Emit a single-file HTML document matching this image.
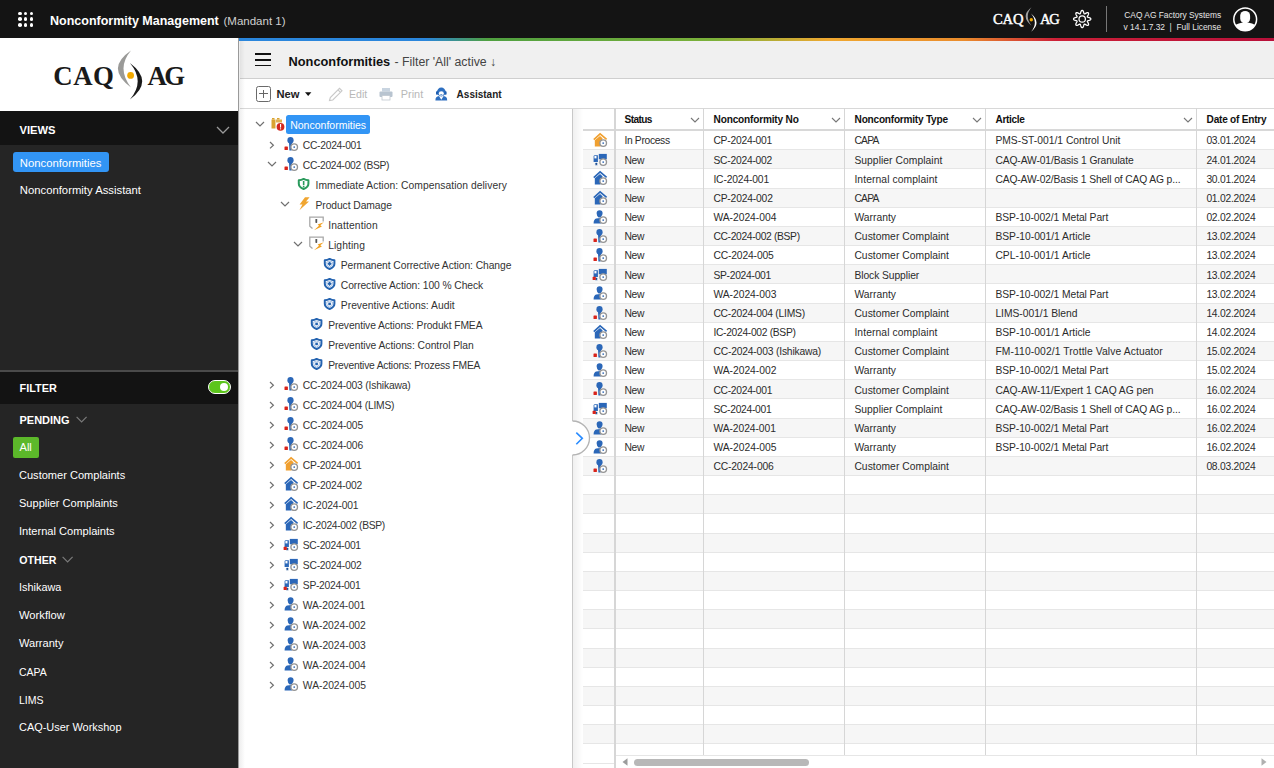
<!DOCTYPE html>
<html><head><meta charset="utf-8">
<style>
*{box-sizing:border-box;margin:0;padding:0}
html,body{width:1274px;height:768px;overflow:hidden;background:#fff;font-family:"Liberation Sans",sans-serif;}
.abs{position:absolute;display:block}
.t{position:absolute;white-space:nowrap;line-height:1}
svg{display:block}
</style></head><body>

<div class="abs" style="left:0;top:0;width:1274px;height:38px;background:#141414"></div>
<div class="abs" style="left:18.1px;top:11.7px;width:3.6px;height:3.6px;border-radius:50%;background:#fff"></div>
<div class="abs" style="left:18.1px;top:17.35px;width:3.6px;height:3.6px;border-radius:50%;background:#fff"></div>
<div class="abs" style="left:18.1px;top:23.0px;width:3.6px;height:3.6px;border-radius:50%;background:#fff"></div>
<div class="abs" style="left:23.900000000000002px;top:11.7px;width:3.6px;height:3.6px;border-radius:50%;background:#fff"></div>
<div class="abs" style="left:23.900000000000002px;top:17.35px;width:3.6px;height:3.6px;border-radius:50%;background:#fff"></div>
<div class="abs" style="left:23.900000000000002px;top:23.0px;width:3.6px;height:3.6px;border-radius:50%;background:#fff"></div>
<div class="abs" style="left:29.700000000000003px;top:11.7px;width:3.6px;height:3.6px;border-radius:50%;background:#fff"></div>
<div class="abs" style="left:29.700000000000003px;top:17.35px;width:3.6px;height:3.6px;border-radius:50%;background:#fff"></div>
<div class="abs" style="left:29.700000000000003px;top:23.0px;width:3.6px;height:3.6px;border-radius:50%;background:#fff"></div>
<div class="t" style="left:50.00px;top:14.98px;font-size:12.50px;font-weight:bold;color:#fff;">Nonconformity Management</div>
<div class="t" style="left:223.50px;top:15.83px;font-size:11.50px;color:#d0d0d0;">(Mandant 1)</div>
<div class="t" style="left:992.9px;top:12.47px;font-family:'Liberation Serif',serif;font-size:14.60px;font-weight:normal;color:#fff;-webkit-text-stroke:0.45px #fff;letter-spacing:-0.10px">CAQ</div><div class="t" style="left:1040.00px;top:12.47px;font-family:'Liberation Serif',serif;font-size:14.60px;font-weight:normal;color:#fff;-webkit-text-stroke:0.45px #fff;letter-spacing:-1.20px">AG</div><svg class="abs" style="left:1020.30px;top:5.20px" width="20.00" height="29.00" viewBox="0 0 40 58"><path d="M23 4.5 Q-0.40 22.2 23 41.5 Q8 22.2 23 4.5 Z" fill="#a0a0a0"/><path d="M21.9 17 Q44.25 35.4 21.9 53.6 Q37.5 35.4 21.9 17 Z" fill="#fff"/><circle cx="22.6" cy="29.4" r="3.4" fill="#f2a900"/></svg>
<svg class="abs" style="left:1072px;top:9px" width="20" height="20" viewBox="0 0 20 20"><path d="M10.20 1.35 L10.54 1.43 L10.86 1.64 L11.15 2.00 L11.39 2.46 L11.59 3.04 L11.73 3.62 L11.87 4.09 L12.00 4.47 L12.14 4.73 L12.32 4.87 L12.55 4.90 L12.84 4.82 L13.20 4.64 L13.63 4.41 L14.14 4.10 L14.69 3.82 L15.19 3.67 L15.64 3.63 L16.03 3.70 L16.32 3.88 L16.50 4.17 L16.57 4.56 L16.53 5.01 L16.38 5.51 L16.10 6.06 L15.79 6.57 L15.56 7.00 L15.38 7.36 L15.30 7.65 L15.33 7.88 L15.47 8.06 L15.73 8.20 L16.11 8.33 L16.58 8.47 L17.16 8.61 L17.74 8.81 L18.20 9.05 L18.56 9.34 L18.77 9.66 L18.85 10.00 L18.77 10.34 L18.56 10.66 L18.20 10.95 L17.74 11.19 L17.16 11.39 L16.58 11.53 L16.11 11.67 L15.73 11.80 L15.47 11.94 L15.33 12.12 L15.30 12.35 L15.38 12.64 L15.56 13.00 L15.79 13.43 L16.10 13.94 L16.38 14.49 L16.53 14.99 L16.57 15.44 L16.50 15.83 L16.32 16.12 L16.03 16.30 L15.64 16.37 L15.19 16.33 L14.69 16.18 L14.14 15.90 L13.63 15.59 L13.20 15.36 L12.84 15.18 L12.55 15.10 L12.32 15.13 L12.14 15.27 L12.00 15.53 L11.87 15.91 L11.73 16.38 L11.59 16.96 L11.39 17.54 L11.15 18.00 L10.86 18.36 L10.54 18.57 L10.20 18.65 L9.86 18.57 L9.54 18.36 L9.25 18.00 L9.01 17.54 L8.81 16.96 L8.67 16.38 L8.53 15.91 L8.40 15.53 L8.26 15.27 L8.08 15.13 L7.85 15.10 L7.56 15.18 L7.20 15.36 L6.77 15.59 L6.26 15.90 L5.71 16.18 L5.21 16.33 L4.76 16.37 L4.37 16.30 L4.08 16.12 L3.90 15.83 L3.83 15.44 L3.87 14.99 L4.02 14.49 L4.30 13.94 L4.61 13.43 L4.84 13.00 L5.02 12.64 L5.10 12.35 L5.07 12.12 L4.93 11.94 L4.67 11.80 L4.29 11.67 L3.82 11.53 L3.24 11.39 L2.66 11.19 L2.20 10.95 L1.84 10.66 L1.63 10.34 L1.55 10.00 L1.63 9.66 L1.84 9.34 L2.20 9.05 L2.66 8.81 L3.24 8.61 L3.82 8.47 L4.29 8.33 L4.67 8.20 L4.93 8.06 L5.07 7.88 L5.10 7.65 L5.02 7.36 L4.84 7.00 L4.61 6.57 L4.30 6.06 L4.02 5.51 L3.87 5.01 L3.83 4.56 L3.90 4.17 L4.08 3.88 L4.37 3.70 L4.76 3.63 L5.21 3.67 L5.71 3.82 L6.26 4.10 L6.77 4.41 L7.20 4.64 L7.56 4.82 L7.85 4.90 L8.08 4.87 L8.26 4.73 L8.40 4.47 L8.53 4.09 L8.67 3.62 L8.81 3.04 L9.01 2.46 L9.25 2.00 L9.54 1.64 L9.86 1.43 Z" fill="none" stroke="#fff" stroke-width="1.25" stroke-linejoin="round"/><circle cx="10.2" cy="10" r="3.2" fill="none" stroke="#fff" stroke-width="1.25"/></svg>
<div class="abs" style="left:1106px;top:6px;width:1px;height:26px;background:#777"></div>
<div class="t" style="left:1124.30px;top:10.56px;font-size:8.40px;color:#e6e6e6;">CAQ AG Factory Systems</div>
<div class="t" style="left:1123.50px;top:23.16px;font-size:8.40px;color:#e6e6e6;">v 14.1.7.32 &nbsp;|&nbsp; Full License</div>
<svg class="abs" style="left:1231px;top:5px" width="28" height="28" viewBox="0 0 28 28"><defs><clipPath id="av"><circle cx="14.2" cy="14.3" r="11.2"/></clipPath></defs><circle cx="14.2" cy="14.3" r="11.4" fill="none" stroke="#fff" stroke-width="1.5"/><g clip-path="url(#av)"><rect x="9.2" y="5.9" width="9.9" height="12.5" rx="4.9" fill="#fff"/><path d="M2 30 L2 22 Q6 17.5 14.2 17.5 Q22.4 17.5 26.4 22 L26.4 30 Z" fill="#fff"/></g></svg>
<div class="abs" style="left:0;top:38px;width:238px;height:730px;background:#252525"></div>
<div class="abs" style="left:0;top:38px;width:238px;height:73px;background:#fff"></div>
<div class="t" style="left:53.2px;top:62.86px;font-family:'Liberation Serif',serif;font-size:26.80px;font-weight:bold;color:#1a1a1a;-webkit-text-stroke:0px #1a1a1a;letter-spacing:0.60px">CAQ</div><div class="t" style="left:147.40px;top:62.86px;font-family:'Liberation Serif',serif;font-size:26.80px;font-weight:bold;color:#1a1a1a;-webkit-text-stroke:0px #1a1a1a;letter-spacing:-2.40px">AG</div><svg class="abs" style="left:108.00px;top:46.20px" width="40.00" height="58.00" viewBox="0 0 40 58"><path d="M23 4.5 Q-3.20 22.2 23 41.5 Q8 22.2 23 4.5 Z" fill="#9a9a98"/><path d="M21.9 17 Q46.50 35.4 21.9 53.6 Q37.5 35.4 21.9 17 Z" fill="#1a1a1a"/><circle cx="22.6" cy="29.4" r="3.4" fill="#f2a900"/></svg>
<div class="abs" style="left:0;top:111px;width:238px;height:34px;background:#131313"></div>
<div class="t" style="left:19.50px;top:125.18px;font-size:11.20px;font-weight:bold;color:#fff;">VIEWS</div>
<svg class="abs" style="left:216px;top:125.6px" width="14" height="9" viewBox="0 0 14 9"><path d="M1 1 L7 7 L13 1" fill="none" stroke="#9a9a9a" stroke-width="1.3"/></svg>
<div class="abs" style="left:13px;top:152px;width:96px;height:20.4px;background:#3295f5;border-radius:3px"></div>
<div class="t" style="left:19.80px;top:158.10px;font-size:11.30px;color:#fff;">Nonconformities</div>
<div class="t" style="left:19.80px;top:185.40px;font-size:11.30px;color:#fff;">Nonconformity Assistant</div>
<div class="abs" style="left:0;top:370px;width:238px;height:1.5px;background:#4a4a4a"></div>
<div class="abs" style="left:0;top:371.5px;width:238px;height:32px;background:#131313"></div>
<div class="t" style="left:19.50px;top:383.44px;font-size:10.90px;font-weight:bold;color:#fff;">FILTER</div>
<div class="abs" style="left:207.5px;top:380px;width:23.5px;height:14px;border-radius:7px;background:#5cc51c;border:1.3px solid #fff"></div>
<div class="abs" style="left:220px;top:383px;width:8px;height:8px;border-radius:50%;background:#fff"></div>
<div class="t" style="left:19.50px;top:414.65px;font-size:11.00px;font-weight:bold;color:#fff;">PENDING</div>
<svg class="abs" style="left:75.5px;top:415.6px" width="12" height="7" viewBox="0 0 12 7"><path d="M0.6 0.8 L5.6 5.8 L10.6 0.8" fill="none" stroke="#7a7a7a" stroke-width="1.2"/></svg>
<div class="abs" style="left:13px;top:437px;width:25.5px;height:20.5px;background:#5cb82a;border-radius:2px"></div>
<div class="t" style="left:19.50px;top:442.47px;font-size:11.10px;color:#fff;">All</div>
<div class="t" style="left:19.00px;top:470.20px;font-size:11.06px;color:#fff;">Customer Complaints</div>
<div class="t" style="left:19.00px;top:498.20px;font-size:11.06px;color:#fff;">Supplier Complaints</div>
<div class="t" style="left:19.00px;top:526.16px;font-size:11.10px;color:#fff;">Internal Complaints</div>
<div class="t" style="left:19.30px;top:554.99px;font-size:10.60px;font-weight:bold;color:#fff;">OTHER</div>
<svg class="abs" style="left:62px;top:556px" width="12" height="7" viewBox="0 0 12 7"><path d="M0.6 0.8 L5.6 5.8 L10.6 0.8" fill="none" stroke="#7a7a7a" stroke-width="1.2"/></svg>
<div class="t" style="left:19.00px;top:582.33px;font-size:10.90px;color:#fff;">Ishikawa</div>
<div class="t" style="left:19.00px;top:610.08px;font-size:11.20px;color:#fff;">Workflow</div>
<div class="t" style="left:19.00px;top:638.19px;font-size:11.07px;color:#fff;">Warranty</div>
<div class="t" style="left:19.00px;top:666.67px;font-size:10.50px;color:#fff;">CAPA</div>
<div class="t" style="left:19.00px;top:694.67px;font-size:10.50px;color:#fff;">LIMS</div>
<div class="t" style="left:19.00px;top:722.29px;font-size:10.95px;color:#fff;">CAQ-User Workshop</div>
<div class="abs" style="left:238px;top:38px;width:1px;height:730px;background:#9a9a9a"></div>
<div class="abs" style="left:239px;top:38px;width:1035px;height:2.5px;background:linear-gradient(90deg,#2a86dc 0%,#2a86dc 18%,#4fa040 24%,#7cb13a 46%,#f0a830 57%,#ea8c2c 70%,#cc2038 79%,#b8103a 100%)"></div>
<div class="abs" style="left:239.5px;top:40.5px;width:1035px;height:37.5px;background:#f0f0f0"></div>
<div class="abs" style="left:239.5px;top:77.5px;width:1035px;height:1.2px;background:#cfcfcf"></div>
<div class="abs" style="left:255px;top:53.3px;width:15.5px;height:1.6px;background:#111"></div>
<div class="abs" style="left:255px;top:59.05px;width:15.5px;height:1.6px;background:#111"></div>
<div class="abs" style="left:255px;top:64.8px;width:15.5px;height:1.6px;background:#111"></div>
<div class="t" style="left:288.50px;top:55.52px;font-size:12.80px;font-weight:bold;color:#111;">Nonconformities</div>
<div class="t" style="left:394.50px;top:55.94px;font-size:12.30px;color:#444;">- Filter 'All' active &#8595;</div>
<div class="abs" style="left:256px;top:86.1px;width:15.4px;height:15.6px;border:1.4px solid #6a6a6a;border-radius:2.5px"></div>
<div class="abs" style="left:259.3px;top:93.3px;width:8.8px;height:1.2px;background:#666"></div>
<div class="abs" style="left:263.1px;top:89.6px;width:1.2px;height:8.6px;background:#666"></div>
<div class="t" style="left:276.40px;top:88.88px;font-size:11.20px;font-weight:bold;color:#222;">New</div>
<svg class="abs" style="left:304.8px;top:92.2px" width="7" height="5" viewBox="0 0 7 5"><path d="M0 0.3 L6.4 0.3 L3.2 3.9 Z" fill="#111"/></svg>
<svg class="abs" style="left:328px;top:86.5px" width="16" height="15" viewBox="0 0 16 15"><path d="M1.5 13.5 L2.3 10.5 L11.5 1.3 L14 3.8 L4.8 13 Z M10 2.8 L12.5 5.3" fill="none" stroke="#c8c8c8" stroke-width="1.1"/></svg>
<div class="t" style="left:349.00px;top:89.39px;font-size:10.60px;color:#b8b8b8;">Edit</div>
<svg class="abs" style="left:378.5px;top:86.5px" width="14" height="14" viewBox="0 0 14 14"><rect x="3" y="1" width="8" height="3.5" fill="#c8d4e0"/><rect x="0.5" y="4.5" width="13" height="5.5" rx="1" fill="#b8c4d0"/><rect x="3" y="8.5" width="8" height="4.5" fill="#fff" stroke="#c0c8d0" stroke-width="0.8"/></svg>
<div class="t" style="left:400.80px;top:89.13px;font-size:10.90px;color:#b8b8b8;">Print</div>
<svg class="abs" style="left:434.8px;top:86.5px" width="13" height="14" viewBox="0 0 13 14"><circle cx="6.3" cy="5" r="4.4" fill="#2e6fc0"/><rect x="1" y="4.2" width="2" height="3.6" rx="0.8" fill="#1f5fb0"/><rect x="9.6" y="4.2" width="2" height="3.6" rx="0.8" fill="#1f5fb0"/><ellipse cx="6.3" cy="6.6" rx="2.5" ry="2.3" fill="#fff"/><rect x="5.3" y="7.3" width="2" height="1" fill="#2e6fc0"/><path d="M0.4 13.4 Q0.4 9.6 4 9.1 L6.3 12.8 L8.6 9.1 Q12.2 9.6 12.2 13.4 Z" fill="#2e6fc0"/></svg>
<div class="t" style="left:456.60px;top:89.90px;font-size:10.00px;font-weight:bold;color:#222;">Assistant</div>
<div class="abs" style="left:239.5px;top:107.8px;width:1035px;height:1.2px;background:#d8d8d8"></div>
<div class="abs" style="left:239px;top:40.5px;width:6px;height:728px;background:linear-gradient(90deg,rgba(0,0,0,0.07),rgba(0,0,0,0))"></div>
<svg class="abs" style="left:254.7px;top:121.2px" width="10" height="6" viewBox="0 0 10 6"><path d="M1 1 L5 5 L9 1" fill="none" stroke="#707070" stroke-width="1.2"/></svg>
<div class="abs" style="left:269.70px;top:116px;width:16px;height:16px"><svg width="16" height="16" viewBox="0 0 16 16"><rect x="1.5" y="3.5" width="4" height="9" fill="#d9a330"/><rect x="6" y="3.5" width="6" height="3" fill="#e0b050"/><rect x="2" y="2" width="2.5" height="1.5" fill="#d9a330"/><rect x="7" y="2" width="2.5" height="1.5" fill="#d9a330"/><circle cx="10.5" cy="10.8" r="3.9" fill="#d2281e"/><rect x="10" y="8" width="1.1" height="3.6" fill="#fff"/><rect x="10" y="12.3" width="1.1" height="1.1" fill="#fff"/></svg></div>
<div class="abs" style="left:285.8px;top:114.5px;width:84.2px;height:19px;background:#3295f5;border-radius:2.5px"></div>
<div class="t" style="left:290.20px;top:120.47px;font-size:10.50px;color:#fff;">Nonconformities</div>
<svg class="abs" style="left:268.5px;top:140.8px" width="6" height="10" viewBox="0 0 6 10"><path d="M1 1 L4.4 4.2 L1 7.4" fill="none" stroke="#707070" stroke-width="1.2"/></svg>
<div class="abs" style="left:282.70px;top:136px;width:16px;height:16px"><svg width="16" height="16" viewBox="0 0 16 16"><ellipse cx="7.5" cy="4.2" rx="3.1" ry="3.3" fill="#2b67b8"/><path d="M6 6.5 L9 6.5 L8.6 14.5 L6.4 14.5 Z" fill="#2b67b8"/><rect x="1.5" y="10.4" width="3.4" height="3.6" rx="0.6" fill="#d8231a"/><circle cx="11.2" cy="11.1" r="3.3" fill="#fff" stroke="#959595" stroke-width="1.35"/><circle cx="11.2" cy="11.1" r="0.9" fill="#3a6fb8"/></svg></div>
<div class="t" style="left:302.80px;top:140.65px;font-size:10.30px;color:#333;letter-spacing:-0.283px;">CC-2024-001</div>
<svg class="abs" style="left:267.37px;top:161.2px" width="10" height="6" viewBox="0 0 10 6"><path d="M1 1 L5 5 L9 1" fill="none" stroke="#707070" stroke-width="1.2"/></svg>
<div class="abs" style="left:282.70px;top:156px;width:16px;height:16px"><svg width="16" height="16" viewBox="0 0 16 16"><ellipse cx="7.5" cy="4.2" rx="3.1" ry="3.3" fill="#2b67b8"/><path d="M6 6.5 L9 6.5 L8.6 14.5 L6.4 14.5 Z" fill="#2b67b8"/><rect x="1.5" y="10.4" width="3.4" height="3.6" rx="0.6" fill="#d8231a"/><circle cx="11.2" cy="11.1" r="3.3" fill="#fff" stroke="#959595" stroke-width="1.35"/><circle cx="11.2" cy="11.1" r="0.9" fill="#3a6fb8"/></svg></div>
<div class="t" style="left:302.80px;top:160.65px;font-size:10.30px;color:#333;letter-spacing:-0.341px;">CC-2024-002 (BSP)</div>
<div class="abs" style="left:295.70px;top:176px;width:16px;height:16px"><svg width="16" height="16" viewBox="0 0 16 16"><path d="M7.6 2.9 Q9.9 4.2 12.4 4.3 L12.4 7.8 Q12.4 11.2 7.6 13 Q2.8 11.2 2.8 7.8 L2.8 4.3 Q5.3 4.2 7.6 2.9 Z" fill="#fff" stroke="#2a9a5c" stroke-width="2" stroke-linejoin="round"/><rect x="6.85" y="5" width="1.6" height="4.2" fill="#2a9a5c"/><rect x="6.85" y="9.9" width="1.6" height="1.5" fill="#2a9a5c"/></svg></div>
<div class="t" style="left:315.47px;top:180.65px;font-size:10.30px;color:#333;letter-spacing:0.050px;">Immediate Action: Compensation delivery</div>
<svg class="abs" style="left:280.03999999999996px;top:201.2px" width="10" height="6" viewBox="0 0 10 6"><path d="M1 1 L5 5 L9 1" fill="none" stroke="#707070" stroke-width="1.2"/></svg>
<div class="abs" style="left:295.70px;top:196px;width:16px;height:16px"><svg width="16" height="16" viewBox="0 0 16 16"><path d="M9 1.2 L13.6 1.2 L10 5.4 L13 5.4 L3.4 14.2 L6.4 8.4 L3.6 8.4 Z" fill="#f0a530"/></svg></div>
<div class="t" style="left:315.47px;top:200.65px;font-size:10.30px;color:#333;letter-spacing:-0.068px;">Product Damage</div>
<div class="abs" style="left:308.70px;top:216px;width:16px;height:16px"><svg width="16" height="16" viewBox="0 0 16 16"><path d="M14.2 5.5 L14.2 1.1 L0.8 1.1 L0.8 10.2 L3.5 12.6" fill="none" stroke="#a8a8a8" stroke-width="1.3"/><rect x="6.4" y="3" width="1.8" height="3.9" rx="0.6" fill="#555"/><path d="M14.9 6.3 L8.6 8.4 L10 9.7 L5 14.2 L12.9 10.6 L11.3 9.3 Z" fill="#f0a020"/></svg></div>
<div class="t" style="left:328.14px;top:220.65px;font-size:10.30px;color:#333;letter-spacing:0.150px;">Inattention</div>
<svg class="abs" style="left:292.71px;top:241.2px" width="10" height="6" viewBox="0 0 10 6"><path d="M1 1 L5 5 L9 1" fill="none" stroke="#707070" stroke-width="1.2"/></svg>
<div class="abs" style="left:308.70px;top:236px;width:16px;height:16px"><svg width="16" height="16" viewBox="0 0 16 16"><path d="M14.2 5.5 L14.2 1.1 L0.8 1.1 L0.8 10.2 L3.5 12.6" fill="none" stroke="#a8a8a8" stroke-width="1.3"/><rect x="6.4" y="3" width="1.8" height="3.9" rx="0.6" fill="#555"/><path d="M14.9 6.3 L8.6 8.4 L10 9.7 L5 14.2 L12.9 10.6 L11.3 9.3 Z" fill="#f0a020"/></svg></div>
<div class="t" style="left:328.14px;top:240.65px;font-size:10.30px;color:#333;letter-spacing:0.103px;">Lighting</div>
<div class="abs" style="left:321.70px;top:256px;width:16px;height:16px"><svg width="16" height="16" viewBox="0 0 16 16"><path d="M7.6 2.9 Q9.9 4.2 12.4 4.3 L12.4 7.8 Q12.4 11.2 7.6 13 Q2.8 11.2 2.8 7.8 L2.8 4.3 Q5.3 4.2 7.6 2.9 Z" fill="#fff" stroke="#2463b0" stroke-width="2" stroke-linejoin="round"/><path d="M7.6 5 Q8.9 5.8 10.4 5.9 L10.4 7.9 Q10.4 10 7.6 11.1 Q4.8 10 4.8 7.9 L4.8 5.9 Q6.3 5.8 7.6 5 Z" fill="none" stroke="#8fb0dc" stroke-width="0.8"/><path d="M7.6 5.6 L9.8 7.8 L7.6 10 L5.4 7.8 Z" fill="#2463b0"/></svg></div>
<div class="t" style="left:340.81px;top:260.65px;font-size:10.30px;color:#333;letter-spacing:-0.067px;">Permanent Corrective Action: Change</div>
<div class="abs" style="left:321.70px;top:276px;width:16px;height:16px"><svg width="16" height="16" viewBox="0 0 16 16"><path d="M7.6 2.9 Q9.9 4.2 12.4 4.3 L12.4 7.8 Q12.4 11.2 7.6 13 Q2.8 11.2 2.8 7.8 L2.8 4.3 Q5.3 4.2 7.6 2.9 Z" fill="#fff" stroke="#2463b0" stroke-width="2" stroke-linejoin="round"/><path d="M7.6 5 Q8.9 5.8 10.4 5.9 L10.4 7.9 Q10.4 10 7.6 11.1 Q4.8 10 4.8 7.9 L4.8 5.9 Q6.3 5.8 7.6 5 Z" fill="none" stroke="#8fb0dc" stroke-width="0.8"/><path d="M7.6 5.6 L9.8 7.8 L7.6 10 L5.4 7.8 Z" fill="#2463b0"/></svg></div>
<div class="t" style="left:340.81px;top:280.65px;font-size:10.30px;color:#333;letter-spacing:-0.084px;">Corrective Action: 100 % Check</div>
<div class="abs" style="left:321.70px;top:296px;width:16px;height:16px"><svg width="16" height="16" viewBox="0 0 16 16"><path d="M7.6 2.9 Q9.9 4.2 12.4 4.3 L12.4 7.8 Q12.4 11.2 7.6 13 Q2.8 11.2 2.8 7.8 L2.8 4.3 Q5.3 4.2 7.6 2.9 Z" fill="#fff" stroke="#2463b0" stroke-width="2" stroke-linejoin="round"/><path d="M7.6 5 Q8.9 5.8 10.4 5.9 L10.4 7.9 Q10.4 10 7.6 11.1 Q4.8 10 4.8 7.9 L4.8 5.9 Q6.3 5.8 7.6 5 Z" fill="none" stroke="#8fb0dc" stroke-width="0.8"/><rect x="6.3" y="6.6" width="2.6" height="2.6" fill="#2463b0"/></svg></div>
<div class="t" style="left:340.81px;top:300.65px;font-size:10.30px;color:#333;letter-spacing:0.018px;">Preventive Actions: Audit</div>
<div class="abs" style="left:308.70px;top:316px;width:16px;height:16px"><svg width="16" height="16" viewBox="0 0 16 16"><path d="M7.6 2.9 Q9.9 4.2 12.4 4.3 L12.4 7.8 Q12.4 11.2 7.6 13 Q2.8 11.2 2.8 7.8 L2.8 4.3 Q5.3 4.2 7.6 2.9 Z" fill="#fff" stroke="#2463b0" stroke-width="2" stroke-linejoin="round"/><path d="M7.6 5 Q8.9 5.8 10.4 5.9 L10.4 7.9 Q10.4 10 7.6 11.1 Q4.8 10 4.8 7.9 L4.8 5.9 Q6.3 5.8 7.6 5 Z" fill="none" stroke="#8fb0dc" stroke-width="0.8"/><rect x="6.3" y="6.6" width="2.6" height="2.6" fill="#2463b0"/></svg></div>
<div class="t" style="left:328.14px;top:320.65px;font-size:10.30px;color:#333;letter-spacing:-0.097px;">Preventive Actions: Produkt FMEA</div>
<div class="abs" style="left:308.70px;top:336px;width:16px;height:16px"><svg width="16" height="16" viewBox="0 0 16 16"><path d="M7.6 2.9 Q9.9 4.2 12.4 4.3 L12.4 7.8 Q12.4 11.2 7.6 13 Q2.8 11.2 2.8 7.8 L2.8 4.3 Q5.3 4.2 7.6 2.9 Z" fill="#fff" stroke="#2463b0" stroke-width="2" stroke-linejoin="round"/><path d="M7.6 5 Q8.9 5.8 10.4 5.9 L10.4 7.9 Q10.4 10 7.6 11.1 Q4.8 10 4.8 7.9 L4.8 5.9 Q6.3 5.8 7.6 5 Z" fill="none" stroke="#8fb0dc" stroke-width="0.8"/><rect x="6.3" y="6.6" width="2.6" height="2.6" fill="#2463b0"/></svg></div>
<div class="t" style="left:328.14px;top:340.65px;font-size:10.30px;color:#333;letter-spacing:-0.049px;">Preventive Actions: Control Plan</div>
<div class="abs" style="left:308.70px;top:356px;width:16px;height:16px"><svg width="16" height="16" viewBox="0 0 16 16"><path d="M7.6 2.9 Q9.9 4.2 12.4 4.3 L12.4 7.8 Q12.4 11.2 7.6 13 Q2.8 11.2 2.8 7.8 L2.8 4.3 Q5.3 4.2 7.6 2.9 Z" fill="#fff" stroke="#2463b0" stroke-width="2" stroke-linejoin="round"/><path d="M7.6 5 Q8.9 5.8 10.4 5.9 L10.4 7.9 Q10.4 10 7.6 11.1 Q4.8 10 4.8 7.9 L4.8 5.9 Q6.3 5.8 7.6 5 Z" fill="none" stroke="#8fb0dc" stroke-width="0.8"/><rect x="6.3" y="6.6" width="2.6" height="2.6" fill="#2463b0"/></svg></div>
<div class="t" style="left:328.14px;top:360.65px;font-size:10.30px;color:#333;letter-spacing:-0.220px;">Preventive Actions: Prozess FMEA</div>
<svg class="abs" style="left:268.5px;top:380.8px" width="6" height="10" viewBox="0 0 6 10"><path d="M1 1 L4.4 4.2 L1 7.4" fill="none" stroke="#707070" stroke-width="1.2"/></svg>
<div class="abs" style="left:282.70px;top:376px;width:16px;height:16px"><svg width="16" height="16" viewBox="0 0 16 16"><ellipse cx="7.5" cy="4.2" rx="3.1" ry="3.3" fill="#2b67b8"/><path d="M6 6.5 L9 6.5 L8.6 14.5 L6.4 14.5 Z" fill="#2b67b8"/><rect x="1.5" y="10.4" width="3.4" height="3.6" rx="0.6" fill="#d8231a"/><circle cx="11.2" cy="11.1" r="3.3" fill="#fff" stroke="#959595" stroke-width="1.35"/><circle cx="11.2" cy="11.1" r="0.9" fill="#3a6fb8"/></svg></div>
<div class="t" style="left:302.80px;top:380.65px;font-size:10.30px;color:#333;letter-spacing:-0.177px;">CC-2024-003 (Ishikawa)</div>
<svg class="abs" style="left:268.5px;top:400.8px" width="6" height="10" viewBox="0 0 6 10"><path d="M1 1 L4.4 4.2 L1 7.4" fill="none" stroke="#707070" stroke-width="1.2"/></svg>
<div class="abs" style="left:282.70px;top:396px;width:16px;height:16px"><svg width="16" height="16" viewBox="0 0 16 16"><ellipse cx="7.5" cy="4.2" rx="3.1" ry="3.3" fill="#2b67b8"/><path d="M6 6.5 L9 6.5 L8.6 14.5 L6.4 14.5 Z" fill="#2b67b8"/><rect x="1.5" y="10.4" width="3.4" height="3.6" rx="0.6" fill="#d8231a"/><circle cx="11.2" cy="11.1" r="3.3" fill="#fff" stroke="#959595" stroke-width="1.35"/><circle cx="11.2" cy="11.1" r="0.9" fill="#3a6fb8"/></svg></div>
<div class="t" style="left:302.80px;top:400.65px;font-size:10.30px;color:#333;letter-spacing:-0.229px;">CC-2024-004 (LIMS)</div>
<svg class="abs" style="left:268.5px;top:420.8px" width="6" height="10" viewBox="0 0 6 10"><path d="M1 1 L4.4 4.2 L1 7.4" fill="none" stroke="#707070" stroke-width="1.2"/></svg>
<div class="abs" style="left:282.70px;top:416px;width:16px;height:16px"><svg width="16" height="16" viewBox="0 0 16 16"><ellipse cx="7.5" cy="4.2" rx="3.1" ry="3.3" fill="#2b67b8"/><path d="M6 6.5 L9 6.5 L8.6 14.5 L6.4 14.5 Z" fill="#2b67b8"/><rect x="1.5" y="10.4" width="3.4" height="3.6" rx="0.6" fill="#d8231a"/><circle cx="11.2" cy="11.1" r="3.3" fill="#fff" stroke="#959595" stroke-width="1.35"/><circle cx="11.2" cy="11.1" r="0.9" fill="#3a6fb8"/></svg></div>
<div class="t" style="left:302.80px;top:420.65px;font-size:10.30px;color:#333;letter-spacing:-0.143px;">CC-2024-005</div>
<svg class="abs" style="left:268.5px;top:440.8px" width="6" height="10" viewBox="0 0 6 10"><path d="M1 1 L4.4 4.2 L1 7.4" fill="none" stroke="#707070" stroke-width="1.2"/></svg>
<div class="abs" style="left:282.70px;top:436px;width:16px;height:16px"><svg width="16" height="16" viewBox="0 0 16 16"><ellipse cx="7.5" cy="4.2" rx="3.1" ry="3.3" fill="#2b67b8"/><path d="M6 6.5 L9 6.5 L8.6 14.5 L6.4 14.5 Z" fill="#2b67b8"/><rect x="1.5" y="10.4" width="3.4" height="3.6" rx="0.6" fill="#d8231a"/><circle cx="11.2" cy="11.1" r="3.3" fill="#fff" stroke="#959595" stroke-width="1.35"/><circle cx="11.2" cy="11.1" r="0.9" fill="#3a6fb8"/></svg></div>
<div class="t" style="left:302.80px;top:440.65px;font-size:10.30px;color:#333;letter-spacing:-0.143px;">CC-2024-006</div>
<svg class="abs" style="left:268.5px;top:460.8px" width="6" height="10" viewBox="0 0 6 10"><path d="M1 1 L4.4 4.2 L1 7.4" fill="none" stroke="#707070" stroke-width="1.2"/></svg>
<div class="abs" style="left:282.70px;top:456px;width:16px;height:16px"><svg width="16" height="16" viewBox="0 0 16 16"><path d="M1.8 7.6 L8.1 1.9 L14.6 7.4" fill="none" stroke="#f0a030" stroke-width="1.7"/><path d="M2.8 8.2 L8 3.9 L10.6 6.2 L8.5 14.5 L2.8 14.5 Z" fill="#f0a030"/><circle cx="11.2" cy="11.1" r="3.3" fill="#fff" stroke="#959595" stroke-width="1.35"/><circle cx="11.2" cy="11.1" r="0.9" fill="#3a6fb8"/></svg></div>
<div class="t" style="left:302.80px;top:460.65px;font-size:10.30px;color:#333;letter-spacing:-0.236px;">CP-2024-001</div>
<svg class="abs" style="left:268.5px;top:480.8px" width="6" height="10" viewBox="0 0 6 10"><path d="M1 1 L4.4 4.2 L1 7.4" fill="none" stroke="#707070" stroke-width="1.2"/></svg>
<div class="abs" style="left:282.70px;top:476px;width:16px;height:16px"><svg width="16" height="16" viewBox="0 0 16 16"><path d="M1.8 7.6 L8.1 1.9 L14.6 7.4" fill="none" stroke="#2b67b8" stroke-width="1.7"/><path d="M2.8 8.2 L8 3.9 L10.6 6.2 L8.5 14.5 L2.8 14.5 Z" fill="#2b67b8"/><circle cx="11.2" cy="11.1" r="3.3" fill="#fff" stroke="#959595" stroke-width="1.35"/><circle cx="11.2" cy="11.1" r="0.9" fill="#3a6fb8"/></svg></div>
<div class="t" style="left:302.80px;top:480.65px;font-size:10.30px;color:#333;letter-spacing:-0.176px;">CP-2024-002</div>
<svg class="abs" style="left:268.5px;top:500.8px" width="6" height="10" viewBox="0 0 6 10"><path d="M1 1 L4.4 4.2 L1 7.4" fill="none" stroke="#707070" stroke-width="1.2"/></svg>
<div class="abs" style="left:282.70px;top:496px;width:16px;height:16px"><svg width="16" height="16" viewBox="0 0 16 16"><path d="M1.8 7.6 L8.1 1.9 L14.6 7.4" fill="none" stroke="#2b67b8" stroke-width="1.7"/><path d="M2.8 8.2 L8 3.9 L10.6 6.2 L8.5 14.5 L2.8 14.5 Z" fill="#2b67b8"/><circle cx="11.2" cy="11.1" r="3.3" fill="#fff" stroke="#959595" stroke-width="1.35"/><circle cx="11.2" cy="11.1" r="0.9" fill="#3a6fb8"/></svg></div>
<div class="t" style="left:302.80px;top:500.65px;font-size:10.30px;color:#333;letter-spacing:-0.145px;">IC-2024-001</div>
<svg class="abs" style="left:268.5px;top:520.8px" width="6" height="10" viewBox="0 0 6 10"><path d="M1 1 L4.4 4.2 L1 7.4" fill="none" stroke="#707070" stroke-width="1.2"/></svg>
<div class="abs" style="left:282.70px;top:516px;width:16px;height:16px"><svg width="16" height="16" viewBox="0 0 16 16"><path d="M1.8 7.6 L8.1 1.9 L14.6 7.4" fill="none" stroke="#2b67b8" stroke-width="1.7"/><path d="M2.8 8.2 L8 3.9 L10.6 6.2 L8.5 14.5 L2.8 14.5 Z" fill="#2b67b8"/><circle cx="11.2" cy="11.1" r="3.3" fill="#fff" stroke="#959595" stroke-width="1.35"/><circle cx="11.2" cy="11.1" r="0.9" fill="#3a6fb8"/></svg></div>
<div class="t" style="left:302.80px;top:520.64px;font-size:10.30px;color:#333;letter-spacing:-0.318px;">IC-2024-002 (BSP)</div>
<svg class="abs" style="left:268.5px;top:540.8px" width="6" height="10" viewBox="0 0 6 10"><path d="M1 1 L4.4 4.2 L1 7.4" fill="none" stroke="#707070" stroke-width="1.2"/></svg>
<div class="abs" style="left:282.70px;top:536px;width:16px;height:16px"><svg width="16" height="16" viewBox="0 0 16 16"><rect x="6.8" y="2.9" width="8" height="5.4" fill="#2b67b8"/><path d="M1.6 5.6 Q1.6 4.2 3 4.2 L5.9 4.2 L5.9 11 L1.6 11 Z" fill="#2b67b8"/><rect x="2.4" y="5" width="2.1" height="2.4" fill="#fff"/><circle cx="4.3" cy="12.9" r="1.5" fill="#1d4f94" stroke="#fff" stroke-width="0.6"/><rect x="0.6" y="10.8" width="3.2" height="3.3" rx="0.6" fill="#d8231a"/><circle cx="11.2" cy="11.1" r="3.3" fill="#fff" stroke="#959595" stroke-width="1.35"/><circle cx="11.2" cy="11.1" r="0.9" fill="#3a6fb8"/></svg></div>
<div class="t" style="left:302.80px;top:540.64px;font-size:10.30px;color:#333;letter-spacing:-0.296px;">SC-2024-001</div>
<svg class="abs" style="left:268.5px;top:560.8px" width="6" height="10" viewBox="0 0 6 10"><path d="M1 1 L4.4 4.2 L1 7.4" fill="none" stroke="#707070" stroke-width="1.2"/></svg>
<div class="abs" style="left:282.70px;top:556px;width:16px;height:16px"><svg width="16" height="16" viewBox="0 0 16 16"><rect x="6.8" y="2.9" width="8" height="5.4" fill="#2b67b8"/><path d="M1.6 5.6 Q1.6 4.2 3 4.2 L5.9 4.2 L5.9 11 L1.6 11 Z" fill="#2b67b8"/><rect x="2.4" y="5" width="2.1" height="2.4" fill="#fff"/><circle cx="4.3" cy="12.9" r="1.5" fill="#1d4f94" stroke="#fff" stroke-width="0.6"/><circle cx="11.2" cy="11.1" r="3.3" fill="#fff" stroke="#959595" stroke-width="1.35"/><circle cx="11.2" cy="11.1" r="0.9" fill="#3a6fb8"/></svg></div>
<div class="t" style="left:302.80px;top:560.64px;font-size:10.30px;color:#333;letter-spacing:-0.236px;">SC-2024-002</div>
<svg class="abs" style="left:268.5px;top:580.8px" width="6" height="10" viewBox="0 0 6 10"><path d="M1 1 L4.4 4.2 L1 7.4" fill="none" stroke="#707070" stroke-width="1.2"/></svg>
<div class="abs" style="left:282.70px;top:576px;width:16px;height:16px"><svg width="16" height="16" viewBox="0 0 16 16"><rect x="6.8" y="2.9" width="8" height="5.4" fill="#2b67b8"/><path d="M1.6 5.6 Q1.6 4.2 3 4.2 L5.9 4.2 L5.9 11 L1.6 11 Z" fill="#2b67b8"/><rect x="2.4" y="5" width="2.1" height="2.4" fill="#fff"/><circle cx="4.3" cy="12.9" r="1.5" fill="#1d4f94" stroke="#fff" stroke-width="0.6"/><rect x="0.6" y="10.8" width="3.2" height="3.3" rx="0.6" fill="#d8231a"/><circle cx="11.2" cy="11.1" r="3.3" fill="#fff" stroke="#959595" stroke-width="1.35"/><circle cx="11.2" cy="11.1" r="0.9" fill="#3a6fb8"/></svg></div>
<div class="t" style="left:302.80px;top:580.64px;font-size:10.30px;color:#333;letter-spacing:-0.279px;">SP-2024-001</div>
<svg class="abs" style="left:268.5px;top:600.8px" width="6" height="10" viewBox="0 0 6 10"><path d="M1 1 L4.4 4.2 L1 7.4" fill="none" stroke="#707070" stroke-width="1.2"/></svg>
<div class="abs" style="left:282.70px;top:596px;width:16px;height:16px"><svg width="16" height="16" viewBox="0 0 16 16"><path d="M4.6 4.3 Q4.6 1.2 7.6 1.2 Q10.6 1.2 10.6 4.3 Q10.6 6.8 8.8 8 L8.2 8.6 L6.6 8.6 Q4.6 6.8 4.6 4.3 Z" fill="#2b67b8"/><path d="M1.6 14.6 Q1.6 10.4 4.2 9.6 Q6 9 8.6 9 L9 14.6 Z" fill="#2b67b8"/><circle cx="11.2" cy="11.1" r="3.3" fill="#fff" stroke="#959595" stroke-width="1.35"/><circle cx="11.2" cy="11.1" r="0.9" fill="#3a6fb8"/></svg></div>
<div class="t" style="left:302.80px;top:600.64px;font-size:10.30px;color:#333;letter-spacing:-0.066px;">WA-2024-001</div>
<svg class="abs" style="left:268.5px;top:620.8px" width="6" height="10" viewBox="0 0 6 10"><path d="M1 1 L4.4 4.2 L1 7.4" fill="none" stroke="#707070" stroke-width="1.2"/></svg>
<div class="abs" style="left:282.70px;top:616px;width:16px;height:16px"><svg width="16" height="16" viewBox="0 0 16 16"><path d="M4.6 4.3 Q4.6 1.2 7.6 1.2 Q10.6 1.2 10.6 4.3 Q10.6 6.8 8.8 8 L8.2 8.6 L6.6 8.6 Q4.6 6.8 4.6 4.3 Z" fill="#2b67b8"/><path d="M1.6 14.6 Q1.6 10.4 4.2 9.6 Q6 9 8.6 9 L9 14.6 Z" fill="#2b67b8"/><circle cx="11.2" cy="11.1" r="3.3" fill="#fff" stroke="#959595" stroke-width="1.35"/><circle cx="11.2" cy="11.1" r="0.9" fill="#3a6fb8"/></svg></div>
<div class="t" style="left:302.80px;top:620.64px;font-size:10.30px;color:#333;letter-spacing:-0.016px;">WA-2024-002</div>
<svg class="abs" style="left:268.5px;top:640.8px" width="6" height="10" viewBox="0 0 6 10"><path d="M1 1 L4.4 4.2 L1 7.4" fill="none" stroke="#707070" stroke-width="1.2"/></svg>
<div class="abs" style="left:282.70px;top:636px;width:16px;height:16px"><svg width="16" height="16" viewBox="0 0 16 16"><path d="M4.6 4.3 Q4.6 1.2 7.6 1.2 Q10.6 1.2 10.6 4.3 Q10.6 6.8 8.8 8 L8.2 8.6 L6.6 8.6 Q4.6 6.8 4.6 4.3 Z" fill="#2b67b8"/><path d="M1.6 14.6 Q1.6 10.4 4.2 9.6 Q6 9 8.6 9 L9 14.6 Z" fill="#2b67b8"/><circle cx="11.2" cy="11.1" r="3.3" fill="#fff" stroke="#959595" stroke-width="1.35"/><circle cx="11.2" cy="11.1" r="0.9" fill="#3a6fb8"/></svg></div>
<div class="t" style="left:302.80px;top:640.64px;font-size:10.30px;color:#333;letter-spacing:-0.016px;">WA-2024-003</div>
<svg class="abs" style="left:268.5px;top:660.8px" width="6" height="10" viewBox="0 0 6 10"><path d="M1 1 L4.4 4.2 L1 7.4" fill="none" stroke="#707070" stroke-width="1.2"/></svg>
<div class="abs" style="left:282.70px;top:656px;width:16px;height:16px"><svg width="16" height="16" viewBox="0 0 16 16"><path d="M4.6 4.3 Q4.6 1.2 7.6 1.2 Q10.6 1.2 10.6 4.3 Q10.6 6.8 8.8 8 L8.2 8.6 L6.6 8.6 Q4.6 6.8 4.6 4.3 Z" fill="#2b67b8"/><path d="M1.6 14.6 Q1.6 10.4 4.2 9.6 Q6 9 8.6 9 L9 14.6 Z" fill="#2b67b8"/><circle cx="11.2" cy="11.1" r="3.3" fill="#fff" stroke="#959595" stroke-width="1.35"/><circle cx="11.2" cy="11.1" r="0.9" fill="#3a6fb8"/></svg></div>
<div class="t" style="left:302.80px;top:660.64px;font-size:10.30px;color:#333;letter-spacing:-0.016px;">WA-2024-004</div>
<svg class="abs" style="left:268.5px;top:680.8px" width="6" height="10" viewBox="0 0 6 10"><path d="M1 1 L4.4 4.2 L1 7.4" fill="none" stroke="#707070" stroke-width="1.2"/></svg>
<div class="abs" style="left:282.70px;top:676px;width:16px;height:16px"><svg width="16" height="16" viewBox="0 0 16 16"><path d="M4.6 4.3 Q4.6 1.2 7.6 1.2 Q10.6 1.2 10.6 4.3 Q10.6 6.8 8.8 8 L8.2 8.6 L6.6 8.6 Q4.6 6.8 4.6 4.3 Z" fill="#2b67b8"/><path d="M1.6 14.6 Q1.6 10.4 4.2 9.6 Q6 9 8.6 9 L9 14.6 Z" fill="#2b67b8"/><circle cx="11.2" cy="11.1" r="3.3" fill="#fff" stroke="#959595" stroke-width="1.35"/><circle cx="11.2" cy="11.1" r="0.9" fill="#3a6fb8"/></svg></div>
<div class="t" style="left:302.80px;top:680.64px;font-size:10.30px;color:#333;letter-spacing:-0.006px;">WA-2024-005</div>
<div class="abs" style="left:572px;top:109px;width:1px;height:659px;background:#c8c8c8"></div>
<div class="abs" style="left:573px;top:109px;width:10px;height:659px;background:linear-gradient(90deg,#f0f0f0,#fff)"></div>
<div class="abs" style="left:582.5px;top:130.50px;width:691.5px;height:19.17px;background:#fff"></div>
<div class="abs" style="left:582.5px;top:149.67px;width:691.5px;height:19.17px;background:#f6f6f6"></div>
<div class="abs" style="left:582.5px;top:168.84px;width:691.5px;height:19.17px;background:#fff"></div>
<div class="abs" style="left:582.5px;top:188.01px;width:691.5px;height:19.17px;background:#f6f6f6"></div>
<div class="abs" style="left:582.5px;top:207.18px;width:691.5px;height:19.17px;background:#fff"></div>
<div class="abs" style="left:582.5px;top:226.35px;width:691.5px;height:19.17px;background:#f6f6f6"></div>
<div class="abs" style="left:582.5px;top:245.52px;width:691.5px;height:19.17px;background:#fff"></div>
<div class="abs" style="left:582.5px;top:264.69px;width:691.5px;height:19.17px;background:#f6f6f6"></div>
<div class="abs" style="left:582.5px;top:283.86px;width:691.5px;height:19.17px;background:#fff"></div>
<div class="abs" style="left:582.5px;top:303.03px;width:691.5px;height:19.17px;background:#f6f6f6"></div>
<div class="abs" style="left:582.5px;top:322.20px;width:691.5px;height:19.17px;background:#fff"></div>
<div class="abs" style="left:582.5px;top:341.37px;width:691.5px;height:19.17px;background:#f6f6f6"></div>
<div class="abs" style="left:582.5px;top:360.54px;width:691.5px;height:19.17px;background:#fff"></div>
<div class="abs" style="left:582.5px;top:379.71px;width:691.5px;height:19.17px;background:#f6f6f6"></div>
<div class="abs" style="left:582.5px;top:398.88px;width:691.5px;height:19.17px;background:#fff"></div>
<div class="abs" style="left:582.5px;top:418.05px;width:691.5px;height:19.17px;background:#f6f6f6"></div>
<div class="abs" style="left:582.5px;top:437.22px;width:691.5px;height:19.17px;background:#fff"></div>
<div class="abs" style="left:582.5px;top:456.39px;width:691.5px;height:19.17px;background:#f6f6f6"></div>
<div class="abs" style="left:582.5px;top:475.56px;width:691.5px;height:19.17px;background:#fff"></div>
<div class="abs" style="left:582.5px;top:494.73px;width:691.5px;height:19.17px;background:#f6f6f6"></div>
<div class="abs" style="left:582.5px;top:513.90px;width:691.5px;height:19.17px;background:#fff"></div>
<div class="abs" style="left:582.5px;top:533.07px;width:691.5px;height:19.17px;background:#f6f6f6"></div>
<div class="abs" style="left:582.5px;top:552.24px;width:691.5px;height:19.17px;background:#fff"></div>
<div class="abs" style="left:582.5px;top:571.41px;width:691.5px;height:19.17px;background:#f6f6f6"></div>
<div class="abs" style="left:582.5px;top:590.58px;width:691.5px;height:19.17px;background:#fff"></div>
<div class="abs" style="left:582.5px;top:609.75px;width:691.5px;height:19.17px;background:#f6f6f6"></div>
<div class="abs" style="left:582.5px;top:628.92px;width:691.5px;height:19.17px;background:#fff"></div>
<div class="abs" style="left:582.5px;top:648.09px;width:691.5px;height:19.17px;background:#f6f6f6"></div>
<div class="abs" style="left:582.5px;top:667.26px;width:691.5px;height:19.17px;background:#fff"></div>
<div class="abs" style="left:582.5px;top:686.43px;width:691.5px;height:19.17px;background:#f6f6f6"></div>
<div class="abs" style="left:582.5px;top:705.60px;width:691.5px;height:19.17px;background:#fff"></div>
<div class="abs" style="left:582.5px;top:724.77px;width:691.5px;height:19.17px;background:#f6f6f6"></div>
<div class="abs" style="left:582.5px;top:743.94px;width:691.5px;height:19.17px;background:#fff"></div>
<div class="abs" style="left:582.5px;top:149.17px;width:691.5px;height:1px;background:#e6e6e6"></div>
<div class="abs" style="left:582.5px;top:168.34px;width:691.5px;height:1px;background:#e6e6e6"></div>
<div class="abs" style="left:582.5px;top:187.51px;width:691.5px;height:1px;background:#e6e6e6"></div>
<div class="abs" style="left:582.5px;top:206.68px;width:691.5px;height:1px;background:#e6e6e6"></div>
<div class="abs" style="left:582.5px;top:225.85px;width:691.5px;height:1px;background:#e6e6e6"></div>
<div class="abs" style="left:582.5px;top:245.02px;width:691.5px;height:1px;background:#e6e6e6"></div>
<div class="abs" style="left:582.5px;top:264.19px;width:691.5px;height:1px;background:#e6e6e6"></div>
<div class="abs" style="left:582.5px;top:283.36px;width:691.5px;height:1px;background:#e6e6e6"></div>
<div class="abs" style="left:582.5px;top:302.53px;width:691.5px;height:1px;background:#e6e6e6"></div>
<div class="abs" style="left:582.5px;top:321.70px;width:691.5px;height:1px;background:#e6e6e6"></div>
<div class="abs" style="left:582.5px;top:340.87px;width:691.5px;height:1px;background:#e6e6e6"></div>
<div class="abs" style="left:582.5px;top:360.04px;width:691.5px;height:1px;background:#e6e6e6"></div>
<div class="abs" style="left:582.5px;top:379.21px;width:691.5px;height:1px;background:#e6e6e6"></div>
<div class="abs" style="left:582.5px;top:398.38px;width:691.5px;height:1px;background:#e6e6e6"></div>
<div class="abs" style="left:582.5px;top:417.55px;width:691.5px;height:1px;background:#e6e6e6"></div>
<div class="abs" style="left:582.5px;top:436.72px;width:691.5px;height:1px;background:#e6e6e6"></div>
<div class="abs" style="left:582.5px;top:455.89px;width:691.5px;height:1px;background:#e6e6e6"></div>
<div class="abs" style="left:582.5px;top:475.06px;width:691.5px;height:1px;background:#e6e6e6"></div>
<div class="abs" style="left:582.5px;top:494.23px;width:691.5px;height:1px;background:#e6e6e6"></div>
<div class="abs" style="left:582.5px;top:513.40px;width:691.5px;height:1px;background:#e6e6e6"></div>
<div class="abs" style="left:582.5px;top:532.57px;width:691.5px;height:1px;background:#e6e6e6"></div>
<div class="abs" style="left:582.5px;top:551.74px;width:691.5px;height:1px;background:#e6e6e6"></div>
<div class="abs" style="left:582.5px;top:570.91px;width:691.5px;height:1px;background:#e6e6e6"></div>
<div class="abs" style="left:582.5px;top:590.08px;width:691.5px;height:1px;background:#e6e6e6"></div>
<div class="abs" style="left:582.5px;top:609.25px;width:691.5px;height:1px;background:#e6e6e6"></div>
<div class="abs" style="left:582.5px;top:628.42px;width:691.5px;height:1px;background:#e6e6e6"></div>
<div class="abs" style="left:582.5px;top:647.59px;width:691.5px;height:1px;background:#e6e6e6"></div>
<div class="abs" style="left:582.5px;top:666.76px;width:691.5px;height:1px;background:#e6e6e6"></div>
<div class="abs" style="left:582.5px;top:685.93px;width:691.5px;height:1px;background:#e6e6e6"></div>
<div class="abs" style="left:582.5px;top:705.10px;width:691.5px;height:1px;background:#e6e6e6"></div>
<div class="abs" style="left:582.5px;top:724.27px;width:691.5px;height:1px;background:#e6e6e6"></div>
<div class="abs" style="left:582.5px;top:743.44px;width:691.5px;height:1px;background:#e6e6e6"></div>
<div class="abs" style="left:582.5px;top:762.61px;width:691.5px;height:1px;background:#e6e6e6"></div>
<div class="abs" style="left:582.5px;top:128.9px;width:691.5px;height:2px;background:#d8d8d8"></div>
<div class="abs" style="left:614.2px;top:108.2px;width:1.6px;height:647.0999999999999px;background:#d6d6d6"></div>
<div class="abs" style="left:702.6px;top:108.2px;width:1.6px;height:647.0999999999999px;background:#d6d6d6"></div>
<div class="abs" style="left:843.5px;top:108.2px;width:1.6px;height:647.0999999999999px;background:#d6d6d6"></div>
<div class="abs" style="left:984.5px;top:108.2px;width:1.6px;height:647.0999999999999px;background:#d6d6d6"></div>
<div class="abs" style="left:1195.5px;top:108.2px;width:1.6px;height:647.0999999999999px;background:#d6d6d6"></div>
<div class="t" style="left:624.60px;top:114.81px;font-size:10.10px;font-weight:bold;color:#111;letter-spacing:-0.633px;">Status</div>
<svg class="abs" style="left:690px;top:116.5px" width="10" height="6" viewBox="0 0 10 6"><path d="M1 1 L5 5 L9 1" fill="none" stroke="#777" stroke-width="1.1"/></svg>
<div class="t" style="left:713.60px;top:114.81px;font-size:10.10px;font-weight:bold;color:#111;letter-spacing:-0.186px;">Nonconformity No</div>
<svg class="abs" style="left:831px;top:116.5px" width="10" height="6" viewBox="0 0 10 6"><path d="M1 1 L5 5 L9 1" fill="none" stroke="#777" stroke-width="1.1"/></svg>
<div class="t" style="left:854.60px;top:114.81px;font-size:10.10px;font-weight:bold;color:#111;letter-spacing:-0.232px;">Nonconformity Type</div>
<svg class="abs" style="left:972px;top:116.5px" width="10" height="6" viewBox="0 0 10 6"><path d="M1 1 L5 5 L9 1" fill="none" stroke="#777" stroke-width="1.1"/></svg>
<div class="t" style="left:995.60px;top:114.81px;font-size:10.10px;font-weight:bold;color:#111;letter-spacing:-0.356px;">Article</div>
<svg class="abs" style="left:1183px;top:116.5px" width="10" height="6" viewBox="0 0 10 6"><path d="M1 1 L5 5 L9 1" fill="none" stroke="#777" stroke-width="1.1"/></svg>
<div class="t" style="left:1206.60px;top:114.81px;font-size:10.10px;font-weight:bold;color:#111;letter-spacing:-0.238px;">Date of Entry</div>
<div class="abs" style="left:592px;top:132.09px;width:16px;height:16px"><svg width="16" height="16" viewBox="0 0 16 16"><path d="M1.8 7.6 L8.1 1.9 L14.6 7.4" fill="none" stroke="#f0a030" stroke-width="1.7"/><path d="M2.8 8.2 L8 3.9 L10.6 6.2 L8.5 14.5 L2.8 14.5 Z" fill="#f0a030"/><circle cx="11.2" cy="11.1" r="3.3" fill="#fff" stroke="#959595" stroke-width="1.35"/><circle cx="11.2" cy="11.1" r="0.9" fill="#3a6fb8"/></svg></div>
<div class="t" style="left:624.40px;top:136.45px;font-size:10.30px;color:#2b2b2b;letter-spacing:-0.328px;">In Process</div>
<div class="t" style="left:713.40px;top:136.45px;font-size:10.30px;color:#2b2b2b;letter-spacing:-0.236px;">CP-2024-001</div>
<div class="t" style="left:854.40px;top:136.45px;font-size:10.30px;color:#2b2b2b;letter-spacing:-0.762px;">CAPA</div>
<div class="t" style="left:995.40px;top:136.45px;font-size:10.30px;color:#2b2b2b;letter-spacing:0.009px;">PMS-ST-001/1 Control Unit</div>
<div class="t" style="left:1206.40px;top:136.45px;font-size:10.30px;color:#2b2b2b;letter-spacing:-0.249px;">03.01.2024</div>
<div class="abs" style="left:592px;top:151.26px;width:16px;height:16px"><svg width="16" height="16" viewBox="0 0 16 16"><rect x="6.8" y="2.9" width="8" height="5.4" fill="#2b67b8"/><path d="M1.6 5.6 Q1.6 4.2 3 4.2 L5.9 4.2 L5.9 11 L1.6 11 Z" fill="#2b67b8"/><rect x="2.4" y="5" width="2.1" height="2.4" fill="#fff"/><circle cx="4.3" cy="12.9" r="1.5" fill="#1d4f94" stroke="#fff" stroke-width="0.6"/><circle cx="11.2" cy="11.1" r="3.3" fill="#fff" stroke="#959595" stroke-width="1.35"/><circle cx="11.2" cy="11.1" r="0.9" fill="#3a6fb8"/></svg></div>
<div class="t" style="left:624.40px;top:155.62px;font-size:10.30px;color:#2b2b2b;letter-spacing:-0.302px;">New</div>
<div class="t" style="left:713.40px;top:155.62px;font-size:10.30px;color:#2b2b2b;letter-spacing:-0.236px;">SC-2024-002</div>
<div class="t" style="left:854.40px;top:155.62px;font-size:10.30px;color:#2b2b2b;letter-spacing:0.052px;">Supplier Complaint</div>
<div class="t" style="left:995.40px;top:155.62px;font-size:10.30px;color:#2b2b2b;letter-spacing:-0.119px;">CAQ-AW-01/Basis 1 Granulate</div>
<div class="t" style="left:1206.40px;top:155.62px;font-size:10.30px;color:#2b2b2b;letter-spacing:-0.249px;">24.01.2024</div>
<div class="abs" style="left:592px;top:170.43px;width:16px;height:16px"><svg width="16" height="16" viewBox="0 0 16 16"><path d="M1.8 7.6 L8.1 1.9 L14.6 7.4" fill="none" stroke="#2b67b8" stroke-width="1.7"/><path d="M2.8 8.2 L8 3.9 L10.6 6.2 L8.5 14.5 L2.8 14.5 Z" fill="#2b67b8"/><circle cx="11.2" cy="11.1" r="3.3" fill="#fff" stroke="#959595" stroke-width="1.35"/><circle cx="11.2" cy="11.1" r="0.9" fill="#3a6fb8"/></svg></div>
<div class="t" style="left:624.40px;top:174.79px;font-size:10.30px;color:#2b2b2b;letter-spacing:-0.302px;">New</div>
<div class="t" style="left:713.40px;top:174.79px;font-size:10.30px;color:#2b2b2b;letter-spacing:-0.145px;">IC-2024-001</div>
<div class="t" style="left:854.40px;top:174.79px;font-size:10.30px;color:#2b2b2b;letter-spacing:0.100px;">Internal complaint</div>
<div class="t" style="left:995.40px;top:174.79px;font-size:10.30px;color:#2b2b2b;letter-spacing:-0.131px;">CAQ-AW-02/Basis 1 Shell of CAQ AG p...</div>
<div class="t" style="left:1206.40px;top:174.79px;font-size:10.30px;color:#2b2b2b;letter-spacing:-0.249px;">30.01.2024</div>
<div class="abs" style="left:592px;top:189.59px;width:16px;height:16px"><svg width="16" height="16" viewBox="0 0 16 16"><path d="M1.8 7.6 L8.1 1.9 L14.6 7.4" fill="none" stroke="#2b67b8" stroke-width="1.7"/><path d="M2.8 8.2 L8 3.9 L10.6 6.2 L8.5 14.5 L2.8 14.5 Z" fill="#2b67b8"/><circle cx="11.2" cy="11.1" r="3.3" fill="#fff" stroke="#959595" stroke-width="1.35"/><circle cx="11.2" cy="11.1" r="0.9" fill="#3a6fb8"/></svg></div>
<div class="t" style="left:624.40px;top:193.96px;font-size:10.30px;color:#2b2b2b;letter-spacing:-0.302px;">New</div>
<div class="t" style="left:713.40px;top:193.96px;font-size:10.30px;color:#2b2b2b;letter-spacing:-0.176px;">CP-2024-002</div>
<div class="t" style="left:854.40px;top:193.96px;font-size:10.30px;color:#2b2b2b;letter-spacing:-0.762px;">CAPA</div>
<div class="t" style="left:1206.40px;top:193.96px;font-size:10.30px;color:#2b2b2b;letter-spacing:-0.249px;">01.02.2024</div>
<div class="abs" style="left:592px;top:208.77px;width:16px;height:16px"><svg width="16" height="16" viewBox="0 0 16 16"><path d="M4.6 4.3 Q4.6 1.2 7.6 1.2 Q10.6 1.2 10.6 4.3 Q10.6 6.8 8.8 8 L8.2 8.6 L6.6 8.6 Q4.6 6.8 4.6 4.3 Z" fill="#2b67b8"/><path d="M1.6 14.6 Q1.6 10.4 4.2 9.6 Q6 9 8.6 9 L9 14.6 Z" fill="#2b67b8"/><circle cx="11.2" cy="11.1" r="3.3" fill="#fff" stroke="#959595" stroke-width="1.35"/><circle cx="11.2" cy="11.1" r="0.9" fill="#3a6fb8"/></svg></div>
<div class="t" style="left:624.40px;top:213.13px;font-size:10.30px;color:#2b2b2b;letter-spacing:-0.302px;">New</div>
<div class="t" style="left:713.40px;top:213.13px;font-size:10.30px;color:#2b2b2b;letter-spacing:-0.016px;">WA-2024-004</div>
<div class="t" style="left:854.40px;top:213.13px;font-size:10.30px;color:#2b2b2b;letter-spacing:0.029px;">Warranty</div>
<div class="t" style="left:995.40px;top:213.13px;font-size:10.30px;color:#2b2b2b;letter-spacing:-0.073px;">BSP-10-002/1 Metal Part</div>
<div class="t" style="left:1206.40px;top:213.13px;font-size:10.30px;color:#2b2b2b;letter-spacing:-0.249px;">02.02.2024</div>
<div class="abs" style="left:592px;top:227.94px;width:16px;height:16px"><svg width="16" height="16" viewBox="0 0 16 16"><ellipse cx="7.5" cy="4.2" rx="3.1" ry="3.3" fill="#2b67b8"/><path d="M6 6.5 L9 6.5 L8.6 14.5 L6.4 14.5 Z" fill="#2b67b8"/><rect x="1.5" y="10.4" width="3.4" height="3.6" rx="0.6" fill="#d8231a"/><circle cx="11.2" cy="11.1" r="3.3" fill="#fff" stroke="#959595" stroke-width="1.35"/><circle cx="11.2" cy="11.1" r="0.9" fill="#3a6fb8"/></svg></div>
<div class="t" style="left:624.40px;top:232.30px;font-size:10.30px;color:#2b2b2b;letter-spacing:-0.302px;">New</div>
<div class="t" style="left:713.40px;top:232.30px;font-size:10.30px;color:#2b2b2b;letter-spacing:-0.341px;">CC-2024-002 (BSP)</div>
<div class="t" style="left:854.40px;top:232.30px;font-size:10.30px;color:#2b2b2b;letter-spacing:0.043px;">Customer Complaint</div>
<div class="t" style="left:995.40px;top:232.30px;font-size:10.30px;color:#2b2b2b;letter-spacing:-0.021px;">BSP-10-001/1 Article</div>
<div class="t" style="left:1206.40px;top:232.30px;font-size:10.30px;color:#2b2b2b;letter-spacing:-0.249px;">13.02.2024</div>
<div class="abs" style="left:592px;top:247.11px;width:16px;height:16px"><svg width="16" height="16" viewBox="0 0 16 16"><ellipse cx="7.5" cy="4.2" rx="3.1" ry="3.3" fill="#2b67b8"/><path d="M6 6.5 L9 6.5 L8.6 14.5 L6.4 14.5 Z" fill="#2b67b8"/><rect x="1.5" y="10.4" width="3.4" height="3.6" rx="0.6" fill="#d8231a"/><circle cx="11.2" cy="11.1" r="3.3" fill="#fff" stroke="#959595" stroke-width="1.35"/><circle cx="11.2" cy="11.1" r="0.9" fill="#3a6fb8"/></svg></div>
<div class="t" style="left:624.40px;top:251.47px;font-size:10.30px;color:#2b2b2b;letter-spacing:-0.302px;">New</div>
<div class="t" style="left:713.40px;top:251.47px;font-size:10.30px;color:#2b2b2b;letter-spacing:-0.143px;">CC-2024-005</div>
<div class="t" style="left:854.40px;top:251.47px;font-size:10.30px;color:#2b2b2b;letter-spacing:0.043px;">Customer Complaint</div>
<div class="t" style="left:995.40px;top:251.47px;font-size:10.30px;color:#2b2b2b;letter-spacing:0.009px;">CPL-10-001/1 Article</div>
<div class="t" style="left:1206.40px;top:251.47px;font-size:10.30px;color:#2b2b2b;letter-spacing:-0.249px;">13.02.2024</div>
<div class="abs" style="left:592px;top:266.27px;width:16px;height:16px"><svg width="16" height="16" viewBox="0 0 16 16"><rect x="6.8" y="2.9" width="8" height="5.4" fill="#2b67b8"/><path d="M1.6 5.6 Q1.6 4.2 3 4.2 L5.9 4.2 L5.9 11 L1.6 11 Z" fill="#2b67b8"/><rect x="2.4" y="5" width="2.1" height="2.4" fill="#fff"/><circle cx="4.3" cy="12.9" r="1.5" fill="#1d4f94" stroke="#fff" stroke-width="0.6"/><rect x="0.6" y="10.8" width="3.2" height="3.3" rx="0.6" fill="#d8231a"/><circle cx="11.2" cy="11.1" r="3.3" fill="#fff" stroke="#959595" stroke-width="1.35"/><circle cx="11.2" cy="11.1" r="0.9" fill="#3a6fb8"/></svg></div>
<div class="t" style="left:624.40px;top:270.64px;font-size:10.30px;color:#2b2b2b;letter-spacing:-0.302px;">New</div>
<div class="t" style="left:713.40px;top:270.64px;font-size:10.30px;color:#2b2b2b;letter-spacing:-0.279px;">SP-2024-001</div>
<div class="t" style="left:854.40px;top:270.64px;font-size:10.30px;color:#2b2b2b;letter-spacing:-0.072px;">Block Supplier</div>
<div class="t" style="left:1206.40px;top:270.64px;font-size:10.30px;color:#2b2b2b;letter-spacing:-0.249px;">13.02.2024</div>
<div class="abs" style="left:592px;top:285.44px;width:16px;height:16px"><svg width="16" height="16" viewBox="0 0 16 16"><path d="M4.6 4.3 Q4.6 1.2 7.6 1.2 Q10.6 1.2 10.6 4.3 Q10.6 6.8 8.8 8 L8.2 8.6 L6.6 8.6 Q4.6 6.8 4.6 4.3 Z" fill="#2b67b8"/><path d="M1.6 14.6 Q1.6 10.4 4.2 9.6 Q6 9 8.6 9 L9 14.6 Z" fill="#2b67b8"/><circle cx="11.2" cy="11.1" r="3.3" fill="#fff" stroke="#959595" stroke-width="1.35"/><circle cx="11.2" cy="11.1" r="0.9" fill="#3a6fb8"/></svg></div>
<div class="t" style="left:624.40px;top:289.81px;font-size:10.30px;color:#2b2b2b;letter-spacing:-0.302px;">New</div>
<div class="t" style="left:713.40px;top:289.81px;font-size:10.30px;color:#2b2b2b;letter-spacing:-0.016px;">WA-2024-003</div>
<div class="t" style="left:854.40px;top:289.81px;font-size:10.30px;color:#2b2b2b;letter-spacing:0.029px;">Warranty</div>
<div class="t" style="left:995.40px;top:289.81px;font-size:10.30px;color:#2b2b2b;letter-spacing:-0.073px;">BSP-10-002/1 Metal Part</div>
<div class="t" style="left:1206.40px;top:289.81px;font-size:10.30px;color:#2b2b2b;letter-spacing:-0.249px;">13.02.2024</div>
<div class="abs" style="left:592px;top:304.62px;width:16px;height:16px"><svg width="16" height="16" viewBox="0 0 16 16"><ellipse cx="7.5" cy="4.2" rx="3.1" ry="3.3" fill="#2b67b8"/><path d="M6 6.5 L9 6.5 L8.6 14.5 L6.4 14.5 Z" fill="#2b67b8"/><rect x="1.5" y="10.4" width="3.4" height="3.6" rx="0.6" fill="#d8231a"/><circle cx="11.2" cy="11.1" r="3.3" fill="#fff" stroke="#959595" stroke-width="1.35"/><circle cx="11.2" cy="11.1" r="0.9" fill="#3a6fb8"/></svg></div>
<div class="t" style="left:624.40px;top:308.98px;font-size:10.30px;color:#2b2b2b;letter-spacing:-0.302px;">New</div>
<div class="t" style="left:713.40px;top:308.98px;font-size:10.30px;color:#2b2b2b;letter-spacing:-0.229px;">CC-2024-004 (LIMS)</div>
<div class="t" style="left:854.40px;top:308.98px;font-size:10.30px;color:#2b2b2b;letter-spacing:0.043px;">Customer Complaint</div>
<div class="t" style="left:995.40px;top:308.98px;font-size:10.30px;color:#2b2b2b;letter-spacing:-0.023px;">LIMS-001/1 Blend</div>
<div class="t" style="left:1206.40px;top:308.98px;font-size:10.30px;color:#2b2b2b;letter-spacing:-0.249px;">14.02.2024</div>
<div class="abs" style="left:592px;top:323.79px;width:16px;height:16px"><svg width="16" height="16" viewBox="0 0 16 16"><path d="M1.8 7.6 L8.1 1.9 L14.6 7.4" fill="none" stroke="#2b67b8" stroke-width="1.7"/><path d="M2.8 8.2 L8 3.9 L10.6 6.2 L8.5 14.5 L2.8 14.5 Z" fill="#2b67b8"/><circle cx="11.2" cy="11.1" r="3.3" fill="#fff" stroke="#959595" stroke-width="1.35"/><circle cx="11.2" cy="11.1" r="0.9" fill="#3a6fb8"/></svg></div>
<div class="t" style="left:624.40px;top:328.15px;font-size:10.30px;color:#2b2b2b;letter-spacing:-0.302px;">New</div>
<div class="t" style="left:713.40px;top:328.15px;font-size:10.30px;color:#2b2b2b;letter-spacing:-0.318px;">IC-2024-002 (BSP)</div>
<div class="t" style="left:854.40px;top:328.15px;font-size:10.30px;color:#2b2b2b;letter-spacing:0.100px;">Internal complaint</div>
<div class="t" style="left:995.40px;top:328.15px;font-size:10.30px;color:#2b2b2b;letter-spacing:-0.021px;">BSP-10-001/1 Article</div>
<div class="t" style="left:1206.40px;top:328.15px;font-size:10.30px;color:#2b2b2b;letter-spacing:-0.249px;">14.02.2024</div>
<div class="abs" style="left:592px;top:342.95px;width:16px;height:16px"><svg width="16" height="16" viewBox="0 0 16 16"><ellipse cx="7.5" cy="4.2" rx="3.1" ry="3.3" fill="#2b67b8"/><path d="M6 6.5 L9 6.5 L8.6 14.5 L6.4 14.5 Z" fill="#2b67b8"/><rect x="1.5" y="10.4" width="3.4" height="3.6" rx="0.6" fill="#d8231a"/><circle cx="11.2" cy="11.1" r="3.3" fill="#fff" stroke="#959595" stroke-width="1.35"/><circle cx="11.2" cy="11.1" r="0.9" fill="#3a6fb8"/></svg></div>
<div class="t" style="left:624.40px;top:347.31px;font-size:10.30px;color:#2b2b2b;letter-spacing:-0.302px;">New</div>
<div class="t" style="left:713.40px;top:347.31px;font-size:10.30px;color:#2b2b2b;letter-spacing:-0.177px;">CC-2024-003 (Ishikawa)</div>
<div class="t" style="left:854.40px;top:347.31px;font-size:10.30px;color:#2b2b2b;letter-spacing:0.043px;">Customer Complaint</div>
<div class="t" style="left:995.40px;top:347.31px;font-size:10.30px;color:#2b2b2b;letter-spacing:0.103px;">FM-110-002/1 Trottle Valve Actuator</div>
<div class="t" style="left:1206.40px;top:347.31px;font-size:10.30px;color:#2b2b2b;letter-spacing:-0.249px;">15.02.2024</div>
<div class="abs" style="left:592px;top:362.12px;width:16px;height:16px"><svg width="16" height="16" viewBox="0 0 16 16"><path d="M4.6 4.3 Q4.6 1.2 7.6 1.2 Q10.6 1.2 10.6 4.3 Q10.6 6.8 8.8 8 L8.2 8.6 L6.6 8.6 Q4.6 6.8 4.6 4.3 Z" fill="#2b67b8"/><path d="M1.6 14.6 Q1.6 10.4 4.2 9.6 Q6 9 8.6 9 L9 14.6 Z" fill="#2b67b8"/><circle cx="11.2" cy="11.1" r="3.3" fill="#fff" stroke="#959595" stroke-width="1.35"/><circle cx="11.2" cy="11.1" r="0.9" fill="#3a6fb8"/></svg></div>
<div class="t" style="left:624.40px;top:366.49px;font-size:10.30px;color:#2b2b2b;letter-spacing:-0.302px;">New</div>
<div class="t" style="left:713.40px;top:366.49px;font-size:10.30px;color:#2b2b2b;letter-spacing:-0.016px;">WA-2024-002</div>
<div class="t" style="left:854.40px;top:366.49px;font-size:10.30px;color:#2b2b2b;letter-spacing:0.029px;">Warranty</div>
<div class="t" style="left:995.40px;top:366.49px;font-size:10.30px;color:#2b2b2b;letter-spacing:-0.073px;">BSP-10-002/1 Metal Part</div>
<div class="t" style="left:1206.40px;top:366.49px;font-size:10.30px;color:#2b2b2b;letter-spacing:-0.249px;">15.02.2024</div>
<div class="abs" style="left:592px;top:381.30px;width:16px;height:16px"><svg width="16" height="16" viewBox="0 0 16 16"><ellipse cx="7.5" cy="4.2" rx="3.1" ry="3.3" fill="#2b67b8"/><path d="M6 6.5 L9 6.5 L8.6 14.5 L6.4 14.5 Z" fill="#2b67b8"/><rect x="1.5" y="10.4" width="3.4" height="3.6" rx="0.6" fill="#d8231a"/><circle cx="11.2" cy="11.1" r="3.3" fill="#fff" stroke="#959595" stroke-width="1.35"/><circle cx="11.2" cy="11.1" r="0.9" fill="#3a6fb8"/></svg></div>
<div class="t" style="left:624.40px;top:385.66px;font-size:10.30px;color:#2b2b2b;letter-spacing:-0.302px;">New</div>
<div class="t" style="left:713.40px;top:385.66px;font-size:10.30px;color:#2b2b2b;letter-spacing:-0.283px;">CC-2024-001</div>
<div class="t" style="left:854.40px;top:385.66px;font-size:10.30px;color:#2b2b2b;letter-spacing:0.043px;">Customer Complaint</div>
<div class="t" style="left:995.40px;top:385.66px;font-size:10.30px;color:#2b2b2b;letter-spacing:-0.047px;">CAQ-AW-11/Expert 1 CAQ AG pen</div>
<div class="t" style="left:1206.40px;top:385.66px;font-size:10.30px;color:#2b2b2b;letter-spacing:-0.249px;">16.02.2024</div>
<div class="abs" style="left:592px;top:400.46px;width:16px;height:16px"><svg width="16" height="16" viewBox="0 0 16 16"><rect x="6.8" y="2.9" width="8" height="5.4" fill="#2b67b8"/><path d="M1.6 5.6 Q1.6 4.2 3 4.2 L5.9 4.2 L5.9 11 L1.6 11 Z" fill="#2b67b8"/><rect x="2.4" y="5" width="2.1" height="2.4" fill="#fff"/><circle cx="4.3" cy="12.9" r="1.5" fill="#1d4f94" stroke="#fff" stroke-width="0.6"/><rect x="0.6" y="10.8" width="3.2" height="3.3" rx="0.6" fill="#d8231a"/><circle cx="11.2" cy="11.1" r="3.3" fill="#fff" stroke="#959595" stroke-width="1.35"/><circle cx="11.2" cy="11.1" r="0.9" fill="#3a6fb8"/></svg></div>
<div class="t" style="left:624.40px;top:404.82px;font-size:10.30px;color:#2b2b2b;letter-spacing:-0.302px;">New</div>
<div class="t" style="left:713.40px;top:404.82px;font-size:10.30px;color:#2b2b2b;letter-spacing:-0.296px;">SC-2024-001</div>
<div class="t" style="left:854.40px;top:404.82px;font-size:10.30px;color:#2b2b2b;letter-spacing:0.052px;">Supplier Complaint</div>
<div class="t" style="left:995.40px;top:404.82px;font-size:10.30px;color:#2b2b2b;letter-spacing:-0.131px;">CAQ-AW-02/Basis 1 Shell of CAQ AG p...</div>
<div class="t" style="left:1206.40px;top:404.82px;font-size:10.30px;color:#2b2b2b;letter-spacing:-0.249px;">16.02.2024</div>
<div class="abs" style="left:592px;top:419.63px;width:16px;height:16px"><svg width="16" height="16" viewBox="0 0 16 16"><path d="M4.6 4.3 Q4.6 1.2 7.6 1.2 Q10.6 1.2 10.6 4.3 Q10.6 6.8 8.8 8 L8.2 8.6 L6.6 8.6 Q4.6 6.8 4.6 4.3 Z" fill="#2b67b8"/><path d="M1.6 14.6 Q1.6 10.4 4.2 9.6 Q6 9 8.6 9 L9 14.6 Z" fill="#2b67b8"/><circle cx="11.2" cy="11.1" r="3.3" fill="#fff" stroke="#959595" stroke-width="1.35"/><circle cx="11.2" cy="11.1" r="0.9" fill="#3a6fb8"/></svg></div>
<div class="t" style="left:624.40px;top:424.00px;font-size:10.30px;color:#2b2b2b;letter-spacing:-0.302px;">New</div>
<div class="t" style="left:713.40px;top:424.00px;font-size:10.30px;color:#2b2b2b;letter-spacing:-0.066px;">WA-2024-001</div>
<div class="t" style="left:854.40px;top:424.00px;font-size:10.30px;color:#2b2b2b;letter-spacing:0.029px;">Warranty</div>
<div class="t" style="left:995.40px;top:424.00px;font-size:10.30px;color:#2b2b2b;letter-spacing:-0.073px;">BSP-10-002/1 Metal Part</div>
<div class="t" style="left:1206.40px;top:424.00px;font-size:10.30px;color:#2b2b2b;letter-spacing:-0.249px;">16.02.2024</div>
<div class="abs" style="left:592px;top:438.81px;width:16px;height:16px"><svg width="16" height="16" viewBox="0 0 16 16"><path d="M4.6 4.3 Q4.6 1.2 7.6 1.2 Q10.6 1.2 10.6 4.3 Q10.6 6.8 8.8 8 L8.2 8.6 L6.6 8.6 Q4.6 6.8 4.6 4.3 Z" fill="#2b67b8"/><path d="M1.6 14.6 Q1.6 10.4 4.2 9.6 Q6 9 8.6 9 L9 14.6 Z" fill="#2b67b8"/><circle cx="11.2" cy="11.1" r="3.3" fill="#fff" stroke="#959595" stroke-width="1.35"/><circle cx="11.2" cy="11.1" r="0.9" fill="#3a6fb8"/></svg></div>
<div class="t" style="left:624.40px;top:443.17px;font-size:10.30px;color:#2b2b2b;letter-spacing:-0.302px;">New</div>
<div class="t" style="left:713.40px;top:443.17px;font-size:10.30px;color:#2b2b2b;letter-spacing:-0.006px;">WA-2024-005</div>
<div class="t" style="left:854.40px;top:443.17px;font-size:10.30px;color:#2b2b2b;letter-spacing:0.029px;">Warranty</div>
<div class="t" style="left:995.40px;top:443.17px;font-size:10.30px;color:#2b2b2b;letter-spacing:-0.073px;">BSP-10-002/1 Metal Part</div>
<div class="t" style="left:1206.40px;top:443.17px;font-size:10.30px;color:#2b2b2b;letter-spacing:-0.249px;">16.02.2024</div>
<div class="abs" style="left:592px;top:457.98px;width:16px;height:16px"><svg width="16" height="16" viewBox="0 0 16 16"><ellipse cx="7.5" cy="4.2" rx="3.1" ry="3.3" fill="#2b67b8"/><path d="M6 6.5 L9 6.5 L8.6 14.5 L6.4 14.5 Z" fill="#2b67b8"/><rect x="1.5" y="10.4" width="3.4" height="3.6" rx="0.6" fill="#d8231a"/><circle cx="11.2" cy="11.1" r="3.3" fill="#fff" stroke="#959595" stroke-width="1.35"/><circle cx="11.2" cy="11.1" r="0.9" fill="#3a6fb8"/></svg></div>
<div class="t" style="left:713.40px;top:462.34px;font-size:10.30px;color:#2b2b2b;letter-spacing:-0.143px;">CC-2024-006</div>
<div class="t" style="left:854.40px;top:462.34px;font-size:10.30px;color:#2b2b2b;letter-spacing:0.043px;">Customer Complaint</div>
<div class="t" style="left:1206.40px;top:462.34px;font-size:10.30px;color:#2b2b2b;letter-spacing:-0.249px;">08.03.2024</div>
<div class="abs" style="left:615.8px;top:755.3px;width:659px;height:13px;background:#fff;border-top:1px solid #e6e6e6"></div>
<div class="abs" style="left:614.2px;top:755px;width:1.6px;height:13px;background:#d6d6d6"></div>
<svg class="abs" style="left:621.5px;top:758px" width="6" height="8" viewBox="0 0 6 8"><path d="M5.5 0.3 L0.5 4 L5.5 7.7 Z" fill="#9c9c9c"/></svg>
<div class="abs" style="left:634px;top:758.5px;width:175px;height:7px;border-radius:3.5px;background:#b8b8b8"></div>
<svg class="abs" style="left:1261px;top:758px" width="6" height="8" viewBox="0 0 6 8"><path d="M0.5 0.3 L5.5 4 L0.5 7.7 Z" fill="#b0b0b0"/></svg>
<svg class="abs" style="left:571px;top:419.3px" width="22" height="40" viewBox="0 0 22 40"><path d="M1.5 2 A17 17 0 0 1 1.5 36" fill="#fff" stroke="#b4b4b4" stroke-width="1.3"/><rect x="0" y="2.6" width="2" height="32.8" fill="#fff"/><path d="M5.3 13.6 L11.3 19.3 L5.3 25.2" fill="none" stroke="#2a8cff" stroke-width="1.6"/></svg>
</body></html>
